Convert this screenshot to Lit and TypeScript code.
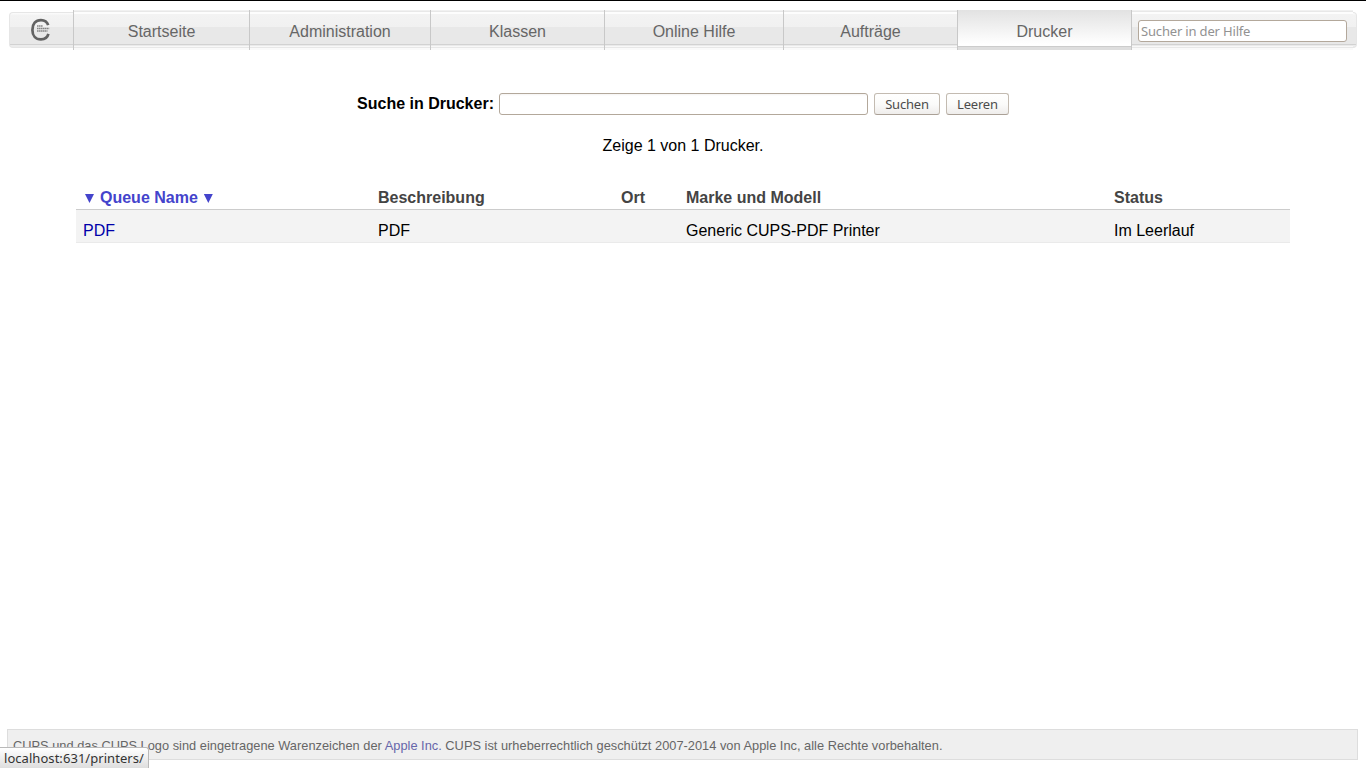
import { LitElement, html, css } from "lit";
import { customElement } from "lit/decorators.js";
import { classMap } from "lit/directives/class-map.js";

const TABS = [
  { label: "Startseite", width: 176 },
  { label: "Administration", width: 181 },
  { label: "Klassen", width: 174 },
  { label: "Online Hilfe", width: 179 },
  { label: "Aufträge", width: 174 },
  { label: "Drucker", width: 174, active: true },
];

@customElement("cups-nav")
export class CupsNav extends LitElement {
  static styles = css`
    :host { display: block; }
    .bar { display: flex; height: 40px; }
    .end {
      box-sizing: border-box; height: 36px; margin-top: 2px;
      border: 1px solid #e6e6e6;
      background: linear-gradient(#fafafa 0 1px, #f3f3f3 2px, #f1f1f1 14px, #e8e8e8 14px, #e8e8e8 31px, #d2d2d2 31px 32px, #ececec 32px);
    }
    .logo { box-sizing: border-box; width: 64px; border-radius: 4px 0 0 4px; border-right: 0; display: flex; justify-content: center; padding-right: 3px; }
    .logo svg { display: block; margin-top: 5px; }
    .cap { width: 4px; border-radius: 0 4px 4px 0; border-left: 0; }
    .tab, .search {
      box-sizing: border-box;
      background: linear-gradient(#f1f1f1 0 1px, #e8e8e8 1px 2px, #fdfdfd 2px 4px, #f3f3f3 4px, #f1f1f1 17px, #e8e8e8 17px 34px, #d2d2d2 34px 35px, #eaeaea 35px 36px, #f8f8f8 36px 37px, #e8e8e8 37px 38px, #fafafa 38px);
    }
    .tab {
      border-left: 1px solid #c8c8c8; text-align: center; color: #666;
      font: 16px/44px "Liberation Sans", Arial, sans-serif; text-decoration: none;
    }
    .tab.active { background: linear-gradient(#e2e2e2, #fff 34px, #fff 36px, #ccc 36px 37px, #dedede 37px); }
    .search { width: 222px; border-left: 1px solid #c8c8c8; padding: 10px 0 0 6px; }
    .field {
      box-sizing: border-box; display: block; width: 209px; height: 22px; margin: 0;
      border: 1px solid #b3a89b; border-radius: 3px; background: #fff; padding: 0 2px;
      font: 13px/20px "Noto Sans", sans-serif; letter-spacing: -0.17px; outline: 0;
    }
    .field::placeholder { color: #929292; opacity: 1; }
  `;

  render() {
    return html`<nav class="bar">
      <a class="end logo">
        <svg width="20" height="24" viewBox="0 0 20 24">
          <path d="M18.2 7.2C17.1 3.8 14.6 2.1 11 2.1C5.6 2.1 2.4 5.8 2.4 11.9C2.4 17.9 5.6 21.4 11 21.4C14.8 21.4 17.5 19.5 18.4 15.9" fill="none" stroke="#626262" stroke-width="2.7" />
          <path d="M7 7.9h6M7 10.4h12.2M7 12.9h10.5" fill="none" stroke="#858585" stroke-width="1.5" stroke-dasharray="1.5 .4" />
        </svg>
      </a>
      ${TABS.map((t) => html`<a class=${classMap({ tab: true, active: !!t.active })} style="width:${t.width}px">${t.label}</a>`)}
      <div class="search"><input class="field" placeholder="Sucher in der Hilfe" /></div>
      <span class="end cap"></span>
    </nav>`;
  }
}

@customElement("cups-printers")
export class CupsPrinters extends LitElement {
  static styles = css`
    :host { display: block; font: 16px/20px "Liberation Sans", Arial, sans-serif; color: #000; }
    .form { display: flex; justify-content: center; align-items: center; height: 22px; }
    .label { font-weight: bold; margin: -1px 5px 0 0; }
    .query {
      box-sizing: border-box; width: 369px; height: 22px; margin: 0 6px 0 0; padding: 0 2px;
      border: 1px solid #b3a89b; border-radius: 3px; background: linear-gradient(#f5f4f3, #fff 2px); outline: 0;
    }
    .button {
      box-sizing: border-box; height: 22px; padding: 0; border: 1px solid #c3bbb1; border-bottom-color: #aaa096;
      border-radius: 3px; background: linear-gradient(#fff, #fbfbfa 50%, #efedeb);
      font: 13px/20px "Noto Sans", sans-serif; color: #4c4c4c; letter-spacing: -0.2px;
    }
    .submit { width: 66px; margin-right: 6px; }
    .clear { width: 63px; }
    .count { margin: 21px 0 0; text-align: center; }
    .table { margin: 31px 76px 0; }
    .row { display: grid; grid-template-columns: 295px 243px 65px 428px 1fr; padding-left: 7px; }
    .head { height: 22px; line-height: 22px; border-bottom: 1px solid #ccc; font-weight: bold; color: #444; }
    .item { height: 32px; line-height: 42px; background: #f3f3f3; border-bottom: 1px solid #eaeaea; }
    .sort { color: #44c; }
    .arrow { display: inline-block; width: 9px; height: 9px; margin: 0 6px 0 2px; background: #44c; clip-path: polygon(0 0, 100% 0, 50% 100%); }
    .arrow.after { margin: 0 0 0 6px; }
    .link { color: #00a; }
  `;

  render() {
    return html`
      <form class="form">
        <label class="label">Suche in Drucker:</label>
        <input class="query" />
        <button class="button submit" type="button">Suchen</button>
        <button class="button clear" type="button">Leeren</button>
      </form>
      <p class="count">Zeige 1 von 1 Drucker.</p>
      <div class="table">
        <div class="row head">
          <a class="sort"><span class="arrow"></span>Queue Name<span class="arrow after"></span></a>
          <span>Beschreibung</span><span>Ort</span><span>Marke und Modell</span><span>Status</span>
        </div>
        <div class="row item">
          <a class="link">PDF</a><span>PDF</span><span></span><span>Generic CUPS-PDF Printer</span><span>Im Leerlauf</span>
        </div>
      </div>`;
  }
}

@customElement("app-root")
export class AppRoot extends LitElement {
  static styles = css`
    :host {
      display: flex; flex-direction: column; box-sizing: border-box; position: relative;
      height: 768px; border-top: 1px solid #000; background: #fff; overflow: hidden;
      padding-bottom: 8px;
    }
    .nav { margin: 9px 9px 0; }
    .main { flex: 1; padding-top: 43px; }
    .footer {
      box-sizing: border-box; height: 31px; margin: 0 8px 0 7px; padding-left: 5px;
      border: 1px solid #ddd; background: #efefef; color: #666;
      font: 12.8px/31px "Liberation Sans", Arial, sans-serif; letter-spacing: 0.015px; white-space: nowrap;
    }
    .apple { color: #66a; }
    .status {
      position: absolute; left: 0; bottom: 0; box-sizing: border-box; width: 149px; height: 21px;
      border: 1px solid #b9b9b9; border-left: 0; border-bottom: 0; border-top-right-radius: 3px;
      background: linear-gradient(#fff, #dedede); padding-left: 4px; color: #333;
      font: 13px/21px "Noto Sans", sans-serif; letter-spacing: 0.05px; white-space: nowrap;
    }
  `;

  render() {
    return html`
      <cups-nav class="nav"></cups-nav>
      <cups-printers class="main"></cups-printers>
      <footer class="footer">CUPS und das CUPS Logo sind eingetragene Warenzeichen der <a class="apple">Apple Inc.</a> CUPS ist urheberrechtlich geschützt 2007-2014 von Apple Inc, alle Rechte vorbehalten.</footer>
      <div class="status">localhost:631/printers/</div>`;
  }
}
